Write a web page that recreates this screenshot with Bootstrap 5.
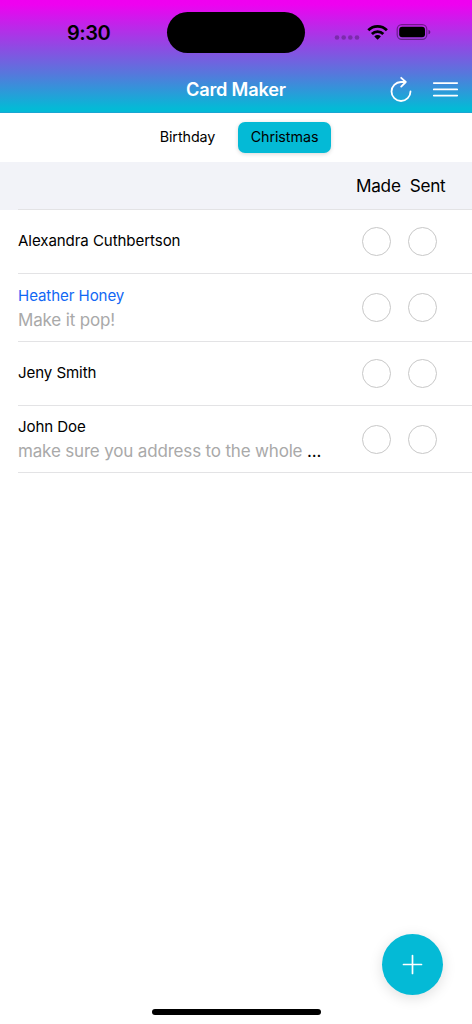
<!DOCTYPE html>
<html lang="en">
<head>
<meta charset="utf-8">
<meta name="viewport" content="width=device-width, initial-scale=1">
<title>Card Maker</title>
<link href="https://cdn.jsdelivr.net/npm/bootstrap@5.3.0/dist/css/bootstrap.min.css" rel="stylesheet">
<style>
  body { font-family: Inter, "Liberation Sans", sans-serif; color: #000; line-height: 1; }
  .screen { height: 1024px; }
  .app-header { height: 113px; color: #fff; border-bottom: 1px solid #1aa6d2;
    background: linear-gradient(#f000f0 0, #ee02f0 4%, #8f4ae3 42%, #5678dc 66%, #04bad6 97%); }
  .status-bar { height: 65px; padding-left: 67px; padding-right: 41px; }
  .clock { width: 100px; font-size: 20px; font-weight: 600; letter-spacing: -.45px; color: #000; }
  .island { width: 138px; height: 41px; margin-top: 12px; }
  .title-bar { height: 47px; padding-right: 14px; }
  .title-bar h1 { width: 100px; margin-left: 186px; font-size: 18.2px; font-weight: 600; letter-spacing: -.2px; line-height: 24px; }
  .tabs-row { height: 49px; padding: 9px 0 0 141px; gap: 4px; }
  .tab { height: 31px; width: 93px; font-size: 14.3px; letter-spacing: -.06px; line-height: 29px; padding: 0 0 2px; border: 0; border-radius: 7px; color: #000; }
  .tab-on { background: #04bad6; box-shadow: 0 1px 4px rgba(0,0,0,.16); }
  .col-head { height: 48px; background: #f2f3f8; font-size: 17.2px; letter-spacing: -.25px; gap: 9px; padding: 0 26.5px 0 0; }
  .people { margin-top: -1px; }
  .person { margin-left: 18px; padding-right: 35px; border-top: 1px solid #e3e3e5; }
  .person-sm { height: 64px; }
  .person-lg { height: 68px; }
  .person:last-child { border-bottom: 1px solid #e3e3e5; }
  .person-text { padding-top: 3px; }
  .person:last-child .person-text { padding-top: 2px; }
  .who { font-size: 15.1px; line-height: 20px; letter-spacing: -.09px; }
  .note { font-size: 17px; line-height: 24px; letter-spacing: -.17px; color: #a9a9a9; margin-top: 2px; }
  .person-sm .who { margin-top: -1px; }
  .tick { width: 29px; height: 29px; border: 1px solid #c8c8c8; }
  .ticks { gap: 17px; }
  .linked { color: #1268f4; }
  .add { width: 61px; height: 61px; right: 29px; bottom: 29px; padding: 0; background: #04bad6; border: 0; box-shadow: 0 3px 14px rgba(0,0,0,.13); }
  .home-bar { width: 169px; height: 6px; left: 151.5px; bottom: 9px; }
</style>
</head>
<body>
<div class="screen position-relative bg-white overflow-hidden">
  <header class="app-header">
    <div class="status-bar d-flex align-items-center">
      <span class="clock">9:30</span>
      <div class="island bg-black rounded-pill align-self-start"></div>
      <svg class="ms-auto" width="98" height="24" viewBox="333 21 98 24">
        <g fill="#000" fill-opacity=".25"><circle cx="337" cy="37.5" r="2.3"/><circle cx="343.700" cy="37.5" r="2.3"/><circle cx="350.300" cy="37.5" r="2.3"/><circle cx="357" cy="37.5" r="2.3"/></g>
        <g fill="none" stroke="#000" stroke-width="2.8"><path d="M368.300 30.200a13.200 13.200 0 0 1 18.600 0"/><path d="M371.900 33.900a8.100 8.100 0 0 1 11.400 0"/></g>
        <path d="M374.300 36.400a4.700 4.700 0 0 1 6.600 0l-3.300 3.300z" fill="#000"/>
        <rect x="397.200" y="24.600" width="29.600" height="14.800" rx="4.600" fill="none" stroke="#000" stroke-opacity=".4" stroke-width="1.200"/>
        <rect x="399.200" y="26.700" width="25.800" height="10.500" rx="3" fill="#000"/>
        <path d="M428.500 29.700c2.400.8 2.400 3.800 0 4.600z" fill="#000" fill-opacity=".45"/>
      </svg>
    </div>
    <div class="title-bar d-flex align-items-center">
      <h1 class="mb-0 text-nowrap">Card Maker</h1>
      <svg class="ms-auto" width="70" height="30" viewBox="388 74 70 30" fill="none" stroke="#fff" stroke-width="1.800" stroke-linecap="round" stroke-linejoin="round">
        <path d="M405.500 82H401a9.500 9.500 0 1 0 9.500 9.500M401.200 77.800l4.600 4.200-4.600 4.600"/>
        <path d="M433.800 83.100h23.400M433.800 89.400h23.400M433.800 95.600h23.400"/>
      </svg>
    </div>
  </header>
  <nav class="tabs-row d-flex">
    <button class="btn tab tab-off">Birthday</button>
    <button class="btn tab tab-on">Christmas</button>
  </nav>
  <main>
    <div class="col-head d-flex justify-content-end align-items-center"><span>Made</span><span>Sent</span></div>
    <div class="people">
      <div class="person person-sm d-flex align-items-center justify-content-between">
        <div class="who">Alexandra Cuthbertson</div>
        <div class="ticks d-flex"><span class="tick rounded-circle"></span><span class="tick rounded-circle"></span></div>
      </div>
      <div class="person person-lg d-flex align-items-center justify-content-between">
        <div class="person-text"><div class="who linked">Heather Honey</div><div class="note">Make it pop!</div></div>
        <div class="ticks d-flex"><span class="tick rounded-circle"></span><span class="tick rounded-circle"></span></div>
      </div>
      <div class="person person-sm d-flex align-items-center justify-content-between">
        <div class="who">Jeny Smith</div>
        <div class="ticks d-flex"><span class="tick rounded-circle"></span><span class="tick rounded-circle"></span></div>
      </div>
      <div class="person person-lg d-flex align-items-center justify-content-between">
        <div class="person-text"><div class="who">John Doe</div><div class="note text-nowrap">make sure you address to the whole <span class="text-black">...</span></div></div>
        <div class="ticks d-flex"><span class="tick rounded-circle"></span><span class="tick rounded-circle"></span></div>
      </div>
    </div>
  </main>
  <button class="btn add rounded-circle position-absolute d-flex align-items-center justify-content-center" aria-label="Add">
    <svg width="21" height="21" viewBox="0 0 21 21" stroke="#fff" stroke-width="1.700" stroke-linecap="round"><path d="M10.500 1.500v18M1.500 10.500h18"/></svg>
  </button>
  <div class="home-bar bg-black rounded-pill position-absolute"></div>
</div>
<script src="https://cdn.jsdelivr.net/npm/bootstrap@5.3.0/dist/js/bootstrap.bundle.min.js"></script>
</body>
</html>
